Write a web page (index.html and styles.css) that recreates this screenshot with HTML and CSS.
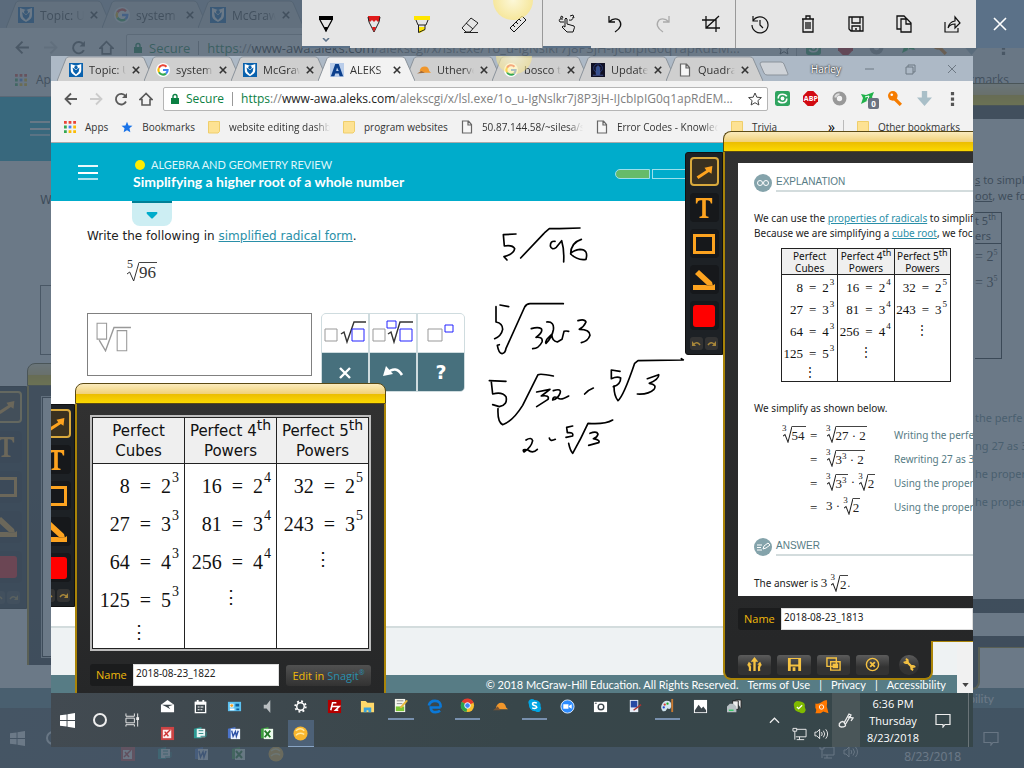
FILE: index.html
```html
<!DOCTYPE html>
<html lang="en">

<head>
    <meta charset="UTF-8">
    <meta name="viewport" content="width=device-width, initial-scale=1.0">
    <title>Sketch</title>
    <link rel="stylesheet" href="styles.css">
</head>

<body>
    <!-- shared icons -->
    <svg class="defs" aria-hidden="true">
        <symbol id="i-shield" viewBox="0 0 16 16"><rect width="16" height="16" fill="#0a62ae" /><path d="M2 1l6 2 6-2v7c0 4-3 5-6 7-3-2-6-3-6-7z" fill="#fff" /><path d="M4 5l4 3 4-3-1 5-3 3-3-3z" fill="#0a62ae" /><circle cx="8" cy="5" r="2" fill="#0a62ae" /></symbol>
        <symbol id="i-google" viewBox="0 0 16 16"><circle cx="8" cy="8" r="8" fill="#fff" /><g fill="none" stroke-width="2.4"><path d="M12 4.3A5.3 5.3 0 0 0 3.4 5.4" stroke="#ea4335" /><path d="M3.4 5.4a5.3 5.3 0 0 0 0 5.2" stroke="#fbbc05" /><path d="M3.4 10.6a5.3 5.3 0 0 0 8 1.5" stroke="#34a853" /><path d="M11.4 12.1A5 5 0 0 0 13.3 8H8" stroke="#4285f4" /></g></symbol>
        <symbol id="i-x" viewBox="0 0 10 10"><path d="M1 1l8 8M9 1l-8 8" stroke="currentColor" stroke-width="2" /></symbol>
        <symbol id="i-doc" viewBox="0 0 12 14"><path d="M1.500 1h6l3 3.500V13h-9zM7 1v4h3.500" fill="#f6f6f6" stroke="#666" stroke-width="1.200" /></symbol>
        <symbol id="i-folder" viewBox="0 0 12 14"><path d="M.5 1.500h11v10L10 13H.5z" fill="#fde293" stroke="#efce6b" /></symbol>
        <symbol id="i-back" viewBox="0 0 14 14"><path d="M13 7H2M7 1.500L1.500 7 7 12.500" fill="none" stroke="currentColor" stroke-width="1.800" /></symbol>
        <symbol id="i-reload" viewBox="0 0 14 14"><path d="M12 9.500A5.300 5.300 0 1 1 11.500 4" fill="none" stroke="currentColor" stroke-width="1.800" /><path d="M13 1v5H8z" fill="currentColor" /></symbol>
        <symbol id="i-home" viewBox="0 0 14 14"><path d="M7 1.500L1 7.500h2V13h8V7.500h2z" fill="none" stroke="currentColor" stroke-width="1.600" /></symbol>
        <symbol id="i-lock" viewBox="0 0 10 12"><rect x="1" y="5" width="8" height="6" fill="#0b8043" /><path d="M3 5V3.500a2 2 0 0 1 4 0V5" fill="none" stroke="#0b8043" stroke-width="1.400" /></symbol>
        <symbol id="i-star" viewBox="0 0 14 14"><path d="M7 1l1.800 4.200 4.600.4-3.500 3 1 4.400L7 10.700 3.100 13l1-4.400-3.500-3 4.600-.4z" /></symbol>
        <symbol id="i-apps" viewBox="0 0 13 13"><g fill="#ea4335"><path d="M0 0h3v3H0zM5 0h3v3H5zM10 0h3v3h-3z" /></g><path d="M0 5h3v3H0zM0 10h3v3H0z" fill="#34a853" /><path d="M5 5h3v3H5z" fill="#4285f4" /><path d="M10 5h3v3h-3zM5 10h3v3H5zM10 10h3v3h-3z" fill="#fbbc05" /></symbol>
        <symbol id="i-green" viewBox="0 0 14 14"><rect width="14" height="14" rx="2" fill="#2fa45f" /><path d="M3 7q0-4 4-4 3 0 4 2M11 7q0 4-4 4-3 0-4-2" stroke="#fff" stroke-width="1.500" fill="none" /><circle cx="7" cy="7" r="1.800" fill="#fff" /></symbol>
        <symbol id="i-abp" viewBox="0 0 16 16"><path d="M5 0h6l5 5v6l-5 5H5l-5-5V5z" fill="#d20a11" /></symbol>
        <symbol id="i-ring" viewBox="0 0 14 14"><circle cx="7" cy="7" r="4.500" fill="none" stroke="#999" stroke-width="4" /><path d="M3 6a4 4 0 0 1 4-3" stroke="#ddd" stroke-width="2" fill="none" /></symbol>
        <symbol id="i-star4" viewBox="0 0 15 13"><path d="M1 2l5 1 8-3-2 5 2 4-5-1-8 4 2-6z" fill="#21b24b" /><path d="M5 5l4-1-2 5" fill="none" stroke="#fff" /></symbol>
        <symbol id="i-key" viewBox="0 0 14 14"><circle cx="4.500" cy="4.500" r="4.500" fill="#f57c00" /><path d="M6 7l6 6" stroke="#f57c00" stroke-width="3" /><circle cx="3.500" cy="3.500" r="1.200" fill="#fff" /></symbol>
        <symbol id="i-down" viewBox="0 0 14 14"><path d="M4.500 0h5v6H14l-7 8-7-8h4.500z" fill="#a9bfc8" /></symbol>
        <symbol id="i-dots" viewBox="0 0 4 14"><path d="M.5 1h3v3h-3zM.5 6h3v3h-3zM.5 11h3v3h-3z" fill="#555" /></symbol>
        <symbol id="i-arrow" viewBox="0 0 20 16"><path d="M1 13L12 6 10 3 19 1l-1 9-3-2L3 16z" fill="#fda31f" /></symbol>
        <symbol id="i-text" viewBox="0 0 20 22"><path d="M1 0h18v6h-1.500q-.5-3.500-4-3.500H12V19q0 1.500 3 1.500V22H5v-1.500q3 0 3-1.500V2.500H6.500Q3 2.500 2.500 6H1z" fill="#fda31f" /></symbol>
        <symbol id="i-rect" viewBox="0 0 22 20"><path d="M1.500 1.500h19v17h-19z" fill="none" stroke="#fda31f" stroke-width="3" /></symbol>
        <symbol id="i-marker" viewBox="0 0 22 20"><path d="M0 15h12l7 1 3-2v6H0zM2 4l4-4 13 12 1 4-6-1z" fill="#fda31f" /></symbol>
        <symbol id="i-undo" viewBox="0 0 9 7"><path d="M2 4q3-3 6 1" fill="none" stroke="#a8873a" stroke-width="1.500" /><path d="M0 1v5h4z" fill="#a8873a" /></symbol>
        <symbol id="i-win" viewBox="0 0 16 16"><path d="M0 2.500l7-1v6H0zM8 1.300L16 0v7.500H8zM0 8.500h7v6l-7-1zM8 8.500h8V16l-8-1.300z" fill="#fff" /></symbol>
        <symbol id="i-ppt" viewBox="0 0 16 16"><rect x="1" y="1" width="14" height="14" fill="#c44" /><path d="M3 4h9v9H3z" fill="#fee" /><path d="M4 11l7-7M5 6l4 5" stroke="#c33" stroke-width="1.500" /></symbol>
        <symbol id="i-pub" viewBox="0 0 16 16"><path d="M1 3l8-2v12H1z" fill="#2b9a94" /><path d="M4 3h9v9H4z" fill="#e8f5f4" /><path d="M6 5h5M6 8h5M8 11h6V6" stroke="#2b8a86" fill="none" /></symbol>
        <symbol id="i-word" viewBox="0 0 16 16"><path d="M1 3l8-2v12H1z" fill="#4b73c9" /><path d="M4 3h10v11H4z" fill="#eef3ff" /><path d="M5 5l1.500 6L9 6l1 5 2-6" stroke="#2c50a5" stroke-width="1.500" fill="none" /></symbol>
        <symbol id="i-xls" viewBox="0 0 16 16"><path d="M1 3l8-2v12H1z" fill="#3c9e3e" /><path d="M4 3h10v11H4z" fill="#ecfaec" /><path d="M5 5l6 7M11 5l-6 7" stroke="#227b27" stroke-width="2" /></symbol>
        <symbol id="i-ball" viewBox="0 0 16 16"><circle cx="8" cy="8" r="7.500" fill="#f9b62d" /><path d="M3 5q5-4 9 0M3 10q4-4 9-1" stroke="#ffe9a0" stroke-width="1.500" fill="none" /></symbol>
        <symbol id="i-net" viewBox="0 0 16 14"><path d="M5 2h10v8H4M8 10v3M5 13h8M1 1h4v3H1zM3 4v9" fill="none" stroke="#eee" /></symbol>
        <symbol id="i-vol" viewBox="0 0 16 14"><path d="M1 5h2l3-3v10L3 9H1zM8 5q1.500 2 0 4M10 3.500q3 3.500 0 7M12.500 2q4 5 0 10" fill="none" stroke="#eee" /></symbol>
        <symbol id="i-note" viewBox="0 0 16 14"><path d="M1 1h14v10h-5l-2 2.500V11H1z" fill="none" stroke="#eee" stroke-width="1.200" /></symbol>
        <symbol id="i-root" viewBox="0 0 9 20" preserveAspectRatio="none"><path d="M0 12l2-2 3 9L9 .5" fill="none" stroke="currentColor" vector-effect="non-scaling-stroke" /></symbol>
        <symbol id="i-tab" viewBox="0 0 98 28" preserveAspectRatio="none"><path d="M0 28L9 3q1-2 3-2h73q2 0 3 2l10 25" stroke="#8b939b" vector-effect="non-scaling-stroke" /></symbol>
    </svg>

    <!-- dimmed desktop behind the snip -->
    <div class="desktop" aria-hidden="true">
        <div class="browser">
            <div class="tabs">
                <div class="tab"><svg class="shape"><use href="#i-tab" /></svg><svg class="fav"><use href="#i-shield" /></svg><span>Topic: U</span><svg class="close"><use href="#i-x" /></svg></div>
                <div class="tab"><svg class="shape"><use href="#i-tab" /></svg><svg class="fav"><use href="#i-google" /></svg><span>system</span><svg class="close"><use href="#i-x" /></svg></div>
                <div class="tab"><svg class="shape"><use href="#i-tab" /></svg><svg class="fav"><use href="#i-shield" /></svg><span>McGraw</span><svg class="close"><use href="#i-x" /></svg></div>
            </div>
            <div class="nav">
                <svg class="ic"><use href="#i-back" /></svg>
                <svg class="ic fwd"><use href="#i-back" /></svg>
                <svg class="ic"><use href="#i-reload" /></svg>
                <svg class="ic"><use href="#i-home" /></svg>
                <div class="omni"><svg class="lock"><use href="#i-lock" /></svg><span class="secure">Secure</span><span class="url"><i>https</i>://<b>www-awa.aleks.com</b>/alekscgi/x/lsl.exe/1o_u-IgNslkr7j8P3jH-IJcbIpIG0q1apRdEM...</span><svg class="star"><use href="#i-star" /></svg></div>
                <div class="ext"><svg><use href="#i-green" /></svg><svg><use href="#i-abp" /></svg><svg><use href="#i-ring" /></svg><svg><use href="#i-star4" /></svg><svg><use href="#i-key" /></svg><svg><use href="#i-down" /></svg><svg><use href="#i-dots" /></svg></div>
            </div>
            <div class="marks">
                <span class="mark"><svg><use href="#i-apps" /></svg>Apps</span>
                <span class="mark other">Other bookmarks</span>
            </div>
            <div class="aleks-head"><span class="burger"></span></div>
            <div class="page"><p class="prompt">Write</p><div class="ghost-box"></div></div>
            <div class="foot"><span>Accessibility</span></div>

            <div class="snagit one">
                <div class="tools">
                    <span class="tool on"><svg><use href="#i-arrow" /></svg></span><span class="tool"><svg><use href="#i-text" /></svg></span><span class="tool"><svg><use href="#i-rect" /></svg></span><span class="tool"><svg><use href="#i-marker" /></svg></span><span class="tool"><i class="red"></i></span>
                    <span class="minis"><span class="mini"><svg><use href="#i-undo" /></svg></span><span class="mini flip"><svg><use href="#i-undo" /></svg></span></span>
                </div>
                <div class="frame"><div class="bar"></div><div class="body"><div class="ghost-pic"></div></div></div>
            </div>

            <div class="snagit two">
                <div class="frame">
                    <div class="bar"></div>
                    <div class="body">
                        <div class="ghost-page">
                            <p><u>s</u> to simpli</p>
                            <p><u>oot</u>, we fo</p>
                            <div class="ghost-table"><div>t 5<sup>th</sup><br>ers</div><p class="num">= 2<sup>5</sup></p><p class="num">= 3<sup>5</sup></p></div>
                            <ul>
                                <li>the perfe</li>
                                <li>ng 27 as 3</li>
                                <li>he proper</li>
                                <li>he proper</li>
                            </ul>
                        </div>
                        <div class="ghost-name"></div>
                    </div>
                    <div class="actions"></div>
                </div>
            </div>
        </div>
        <div class="taskbar">
            <svg class="start"><use href="#i-win" /></svg>
            <span class="ring"></span>
            <div class="ghost-icons"><svg><use href="#i-ppt" /></svg><svg><use href="#i-pub" /></svg><svg><use href="#i-word" /></svg><svg><use href="#i-xls" /></svg><svg><use href="#i-ball" /></svg></div>
            <div class="ghost-tray"><svg><use href="#i-net" /></svg><svg><use href="#i-vol" /></svg></div>
            <div class="clock">8/23/2018</div>
            <svg class="note"><use href="#i-note" /></svg>
        </div>
    </div>
    <div class="veil"></div>

    <!-- the snip itself -->
    <main class="shot">
        <div class="browser">
            <div class="tabs">
                <div class="tab"><svg class="shape"><use href="#i-tab" /></svg><svg class="fav"><use href="#i-shield" /></svg><span>Topic: U</span><svg class="close"><use href="#i-x" /></svg></div>
                <div class="tab"><svg class="shape"><use href="#i-tab" /></svg><svg class="fav"><use href="#i-google" /></svg><span>system</span><svg class="close"><use href="#i-x" /></svg></div>
                <div class="tab"><svg class="shape"><use href="#i-tab" /></svg><svg class="fav"><use href="#i-shield" /></svg><span>McGraw</span><svg class="close"><use href="#i-x" /></svg></div>
                <div class="tab active"><svg class="shape"><use href="#i-tab" /></svg><svg class="fav" viewBox="0 0 16 16"><rect width="16" height="16" fill="#b9cdea" /><path d="M1 15L6 1h4l5 14h-4l-1-3H6l-1 3zM7 9h3L8 5z" fill="#0b3f8c" /></svg><span>ALEKS</span><svg class="close"><use href="#i-x" /></svg></div>
                <div class="tab"><svg class="shape"><use href="#i-tab" /></svg><svg class="fav" viewBox="0 0 16 16"><path d="M3 9q1-5 6-5 4 0 5 5l2 2H5z" fill="#f0962b" /><path d="M0 12l5-3 4 2z" fill="#a06a3a" /></svg><span>Utherve</span><svg class="close"><use href="#i-x" /></svg></div>
                <div class="tab"><svg class="shape"><use href="#i-tab" /></svg><svg class="fav"><use href="#i-google" /></svg><span>bosco t</span><svg class="close"><use href="#i-x" /></svg></div>
                <div class="tab"><svg class="shape"><use href="#i-tab" /></svg><svg class="fav" viewBox="0 0 16 16"><rect width="16" height="16" fill="#101024" /><circle cx="8" cy="6" r="5" fill="none" stroke="#2b3e80" /><path d="M6 13V5l2-2 2 2v8zM2 14h12" fill="#34508f" stroke="#46589a" /></svg><span>Update</span><svg class="close"><use href="#i-x" /></svg></div>
                <div class="tab"><svg class="shape"><use href="#i-tab" /></svg><svg class="fav"><use href="#i-doc" /></svg><span>Quadra</span><svg class="close"><use href="#i-x" /></svg></div>
                <svg class="newtab" viewBox="0 0 30 15"><path d="M1 3q0-2 2-2h19q2 0 3 2l4 10q0 1-1 1H8q-2 0-3-2z" fill="#cfd3d8" stroke="#8b939b" /></svg>
                <span class="user">Harley</span>
                <svg class="winctl" viewBox="0 0 92 12"><path d="M0 6h9M41 4h7v7h-7zM43 4V2h7v7h-2M83 2l8 8M91 2l-8 8" fill="none" stroke="#6d7883" /></svg>
            </div>
            <div class="nav">
                <svg class="ic"><use href="#i-back" /></svg>
                <svg class="ic fwd"><use href="#i-back" /></svg>
                <svg class="ic"><use href="#i-reload" /></svg>
                <svg class="ic"><use href="#i-home" /></svg>
                <div class="omni"><svg class="lock"><use href="#i-lock" /></svg><span class="secure">Secure</span><span class="url"><i>https</i>://<b>www-awa.aleks.com</b>/alekscgi/x/lsl.exe/1o_u-IgNslkr7j8P3jH-IJcbIpIG0q1apRdEM...</span><svg class="star"><use href="#i-star" /></svg></div>
                <div class="ext">
                    <svg><use href="#i-green" /></svg>
                    <span class="abp"><svg><use href="#i-abp" /></svg><b>ABP</b></span>
                    <svg><use href="#i-ring" /></svg>
                    <span class="abp"><svg><use href="#i-star4" /></svg><em>0</em></span>
                    <svg><use href="#i-key" /></svg>
                    <svg><use href="#i-down" /></svg>
                    <svg><use href="#i-dots" /></svg>
                </div>
            </div>
            <div class="marks">
                <a class="mark" href="#"><svg><use href="#i-apps" /></svg>Apps</a>
                <a class="mark blue" href="#"><svg><use href="#i-star" /></svg>Bookmarks</a>
                <a class="mark fade" href="#"><svg><use href="#i-folder" /></svg>website editing dashb</a>
                <a class="mark" href="#"><svg><use href="#i-folder" /></svg>program websites</a>
                <a class="mark fade" href="#"><svg><use href="#i-doc" /></svg>50.87.144.58/~silesa/s</a>
                <a class="mark fade" href="#"><svg><use href="#i-doc" /></svg>Error Codes - Knowled</a>
                <a class="mark" href="#"><svg><use href="#i-folder" /></svg>Trivia</a>
                <span class="more">»</span>
                <a class="mark other" href="#"><svg><use href="#i-folder" /></svg>Other bookmarks</a>
            </div>

            <header class="aleks-head">
                <span class="burger"></span>
                <div class="titles">
                    <div class="unit"><i class="dot"></i>ALGEBRA AND GEOMETRY REVIEW</div>
                    <h1>Simplifying a higher root of a whole number</h1>
                </div>
                <div class="progress"><i class="done"></i><i></i></div>
            </header>

            <section class="page">
                <div class="pull"><svg viewBox="0 0 12 8"><path d="M1 1h10q1 1 0 2L7 7q-1 1-2 0L1 3q-1-1 0-2" fill="#00accb" /></svg></div>
                <p class="prompt">Write the following in <a href="#">simplified radical form</a>.</p>
                <div class="question"><span class="root big"><sup>5</sup><svg><use href="#i-root" /></svg><span>96</span></span></div>
                <div class="work">
                    <div class="answer" role="textbox" tabindex="0"><svg viewBox="0 0 34 28"><path d="M1 1h9v15H1zM20 8h9v19h-9z" fill="none" stroke="#999" /><path d="M3 17l6 10L17 5h16" fill="none" stroke="#999" stroke-width="1.300" /></svg></div>
                    <div class="keypad">
                        <button aria-label="Square root"><svg viewBox="0 0 42 26"><path d="M1 9h12v12H1z" fill="none" stroke="#999" /><path d="M17 14l3-2 3 10 7-20h13" fill="none" stroke="#333" stroke-width="1.400" /><path d="M28 9h12v12H28z" fill="none" stroke="#22f" /></svg></button>
                        <button aria-label="Nth root"><svg viewBox="0 0 42 26"><path d="M1 9h12v12H1z" fill="none" stroke="#999" /><path d="M16 14l3-2 3 10 6-20h13" fill="none" stroke="#333" stroke-width="1.400" /><path d="M28 9h12v12H28zM15 1h9v7h-9z" fill="none" stroke="#22f" /></svg></button>
                        <button aria-label="Exponent"><svg viewBox="0 0 42 26"><path d="M8 9h14v12H8z" fill="none" stroke="#999" /><path d="M25 5h8v7h-8z" fill="none" stroke="#22f" /></svg></button>
                        <button class="act" aria-label="Clear"><svg viewBox="0 0 42 26"><path d="M16 9l10 10M26 9L16 19" stroke="#fff" stroke-width="2.400" /></svg></button>
                        <button class="act" aria-label="Undo"><svg viewBox="0 0 42 26"><path d="M11 17l3-10 7 8z" fill="#fff" /><path d="M15 14q9-8 15 2" fill="none" stroke="#fff" stroke-width="2.600" /></svg></button>
                        <button class="act help">?</button>
                    </div>
                </div>
            </section>
            <div class="pagefoot"></div>
            <footer class="foot"><span>© 2018 McGraw-Hill Education. All Rights Reserved.</span><a href="#">Terms of Use</a><i>|</i><a href="#">Privacy</a><i>|</i><a href="#">Accessibility</a></footer>
            <div class="scroll"><svg viewBox="0 0 8 5"><path d="M0 0h8L4 5z" fill="#444" /></svg></div>

            <!-- handwriting -->
            <svg class="ink" viewBox="0 0 900 990">
                <g fill="none" stroke="#000" stroke-width="5" stroke-linecap="round" stroke-linejoin="round">
                    <path d="M228 282l-38 2 3 34q25-4 31 8-2 16-32 24l9 10M242 354l70-74M314 278l14-12h30l62-2M345 304q-14-2-14 14 4 14 18 4l16-20q8 26 6 64M424 298q-32 10-32 44 20 20 46 16 8-30-18-30-18 2-28 12" />
                    <path d="M206 500l-26-5M168 500v46q20 4 20 22-4 20-24 28M178 614l-6 2q4 24 14 25 10-2 12-16l56-124q6-10 16-10h100M274 566q20-6 30 0 6 10-16 26 22-2 18 14-10 20-28 20M320 546q24-2 20 24-4 22-22 40-4-8 8-18l10-10q-2 20 16 24l14-8 6-24q6-2 14 0M414 542q20-6 24 4-6 14-20 22 32 0 32 18-6 18-26 22" />
                    <path d="M148 722l50 2M154 726l4 36q28-8 40 8 6 24-20 30l-20-6M174 806q-2 40 14 48 30-10 60-58l46-92q8-4 46 4M290 756l40-8-26 20q26-4 20 10l-34 22M340 752q26-8 20 8-6 16-22 20 0-14 16-6 8 8 32-6M434 762q10-12 26-18M540 694l-26-4v26q18-8 28-2 0 20-22 26l2-2q0 30 12 44 16-12 50-112l10-8 136-2-6-4M622 716l34-12q2 12-28 26 24 4 14 18-16 16-50 14" />
                    <path d="M258 900q16-10 20 2-4 20-26 34-8-10 12-6 14 12 28-2M328 894q2 12 18 4M398 858l-18 4 2 16q20-2 16 10l-20 4M386 910q4 20 12 30 24-42 46-90 50 4 74-10M450 880q20-8 24 2-2 10-14 14 22 4 16 12l-30 8" />
                </g>
            </svg>

            <div class="snagit one">
                <div class="tools">
                    <span class="tool on"><svg><use href="#i-arrow" /></svg></span><span class="tool"><svg><use href="#i-text" /></svg></span><span class="tool"><svg><use href="#i-rect" /></svg></span><span class="tool"><svg><use href="#i-marker" /></svg></span><span class="tool"><i class="red"></i></span>
                    <span class="minis"><span class="mini"><svg><use href="#i-undo" /></svg></span><span class="mini flip"><svg><use href="#i-undo" /></svg></span></span>
                </div>
                <div class="frame">
                    <div class="bar"></div>
                    <div class="body">
                        <div class="pic">
                            <table class="powers">
                                <thead>
                                    <tr><th>Perfect<br>Cubes</th><th>Perfect 4<sup>th</sup><br>Powers</th><th>Perfect 5<sup>th</sup><br>Powers</th></tr>
                                </thead>
                                <tbody>
                                    <tr><td>8<b>=</b>2<sup>3</sup></td><td>16<b>=</b>2<sup>4</sup></td><td>32<b>=</b>2<sup>5</sup></td></tr>
                                    <tr><td>27<b>=</b>3<sup>3</sup></td><td>81<b>=</b>3<sup>4</sup></td><td>243<b>=</b>3<sup>5</sup></td></tr>
                                    <tr><td>64<b>=</b>4<sup>3</sup></td><td>256<b>=</b>4<sup>4</sup></td><td class="etc">⋮</td></tr>
                                    <tr><td>125<b>=</b>5<sup>3</sup></td><td class="etc">⋮</td><td></td></tr>
                                    <tr><td class="etc">⋮</td><td></td><td></td></tr>
                                </tbody>
                            </table>
                        </div>
                        <div class="namerow"><label for="n1">Name</label><input id="n1" type="text" value="2018-08-23_1822"><button class="edit">Edit in <span>Snagit<sup>®</sup></span></button></div>
                    </div>
                </div>
            </div>

            <div class="snagit two">
                <div class="tools">
                    <span class="tool on"><svg><use href="#i-arrow" /></svg></span><span class="tool"><svg><use href="#i-text" /></svg></span><span class="tool"><svg><use href="#i-rect" /></svg></span><span class="tool"><svg><use href="#i-marker" /></svg></span><span class="tool"><i class="red"></i></span>
                    <span class="minis"><span class="mini"><svg><use href="#i-undo" /></svg></span><span class="mini flip"><svg><use href="#i-undo" /></svg></span></span>
                </div>
                <div class="frame">
                    <div class="bar"></div>
                    <div class="body">
                        <div class="explain">
                            <h2><svg viewBox="0 0 18 18"><circle cx="9" cy="9" r="9" fill="#84a3ab" /><circle cx="6" cy="9" r="2.500" fill="none" stroke="#fff" /><circle cx="12" cy="9" r="2.500" fill="none" stroke="#fff" /></svg><span>EXPLANATION</span></h2>
                            <p>We can use the <a href="#">properties of radicals</a> to simplify<br>Because we are simplifying a <a href="#">cube root</a>, we focus</p>
                            <table class="powers small">
                                <thead>
                                    <tr><th>Perfect<br>Cubes</th><th>Perfect 4<sup>th</sup><br>Powers</th><th>Perfect 5<sup>th</sup><br>Powers</th></tr>
                                </thead>
                                <tbody>
                                    <tr><td>8<b>=</b>2<sup>3</sup></td><td>16<b>=</b>2<sup>4</sup></td><td>32<b>=</b>2<sup>5</sup></td></tr>
                                    <tr><td>27<b>=</b>3<sup>3</sup></td><td>81<b>=</b>3<sup>4</sup></td><td>243<b>=</b>3<sup>5</sup></td></tr>
                                    <tr><td>64<b>=</b>4<sup>3</sup></td><td>256<b>=</b>4<sup>4</sup></td><td class="etc">⋮</td></tr>
                                    <tr><td>125<b>=</b>5<sup>3</sup></td><td class="etc">⋮</td><td></td></tr>
                                    <tr><td class="etc">⋮</td><td></td><td></td></tr>
                                </tbody>
                            </table>
                            <p>We simplify as shown below.</p>
                            <div class="steps">
                                <span class="root"><sup>3</sup><svg><use href="#i-root" /></svg><span>54</span></span><span>=</span><span><span class="root"><sup>3</sup><svg><use href="#i-root" /></svg><span>27 · 2</span></span></span><em>Writing the perfect</em>
                                <span></span><span>=</span><span><span class="root"><sup>3</sup><svg><use href="#i-root" /></svg><span>3<sup>3</sup> · 2</span></span></span><em>Rewriting 27 as 3</em>
                                <span></span><span>=</span><span><span class="root"><sup>3</sup><svg><use href="#i-root" /></svg><span>3<sup>3</sup></span></span> · <span class="root"><sup>3</sup><svg><use href="#i-root" /></svg><span>2</span></span></span><em>Using the property</em>
                                <span></span><span>=</span><span>3 · <span class="root"><sup>3</sup><svg><use href="#i-root" /></svg><span>2</span></span></span><em>Using the property</em>
                            </div>
                            <h2><svg viewBox="0 0 18 18"><circle cx="9" cy="9" r="9" fill="#84a3ab" /><path d="M3 7h5M3 9.500h4M3 12h5M9 11l1-3 4-3 2 2-4 3z" fill="none" stroke="#fff" /></svg><span>ANSWER</span></h2>
                            <p class="final">The answer is <span class="math">3 <span class="root"><sup>3</sup><svg><use href="#i-root" /></svg><span>2</span></span></span>.</p>
                        </div>
                        <div class="namerow"><label for="n2">Name</label><input id="n2" type="text" value="2018-08-23_1813"></div>
                    </div>
                    <div class="actions">
                        <button aria-label="Share"><svg viewBox="0 0 16 16"><path d="M8 15V3M3 15q1-4-1-7M13 15q-1-4 1-7" fill="none" stroke="#f5c242" stroke-width="2.500" /><path d="M8 0l4 5H4zM0 9l2-4 3 3zM16 9l-2-4-3 3z" fill="#f5c242" /></svg></button>
                        <button aria-label="Save"><svg viewBox="0 0 16 16"><path d="M1 1h14v14H1zM4 2h8v6H4zM4 10h8v5H4zM6 11h3v4H6z" fill="#f5c242" fill-rule="evenodd" /></svg></button>
                        <button aria-label="Copy"><svg viewBox="0 0 16 16"><path d="M1 1h10v9H1zM5 5h10v9H5z" fill="none" stroke="#f5c242" stroke-width="1.500" /><path d="M7 7h6v5H7z" fill="#f5c242" /></svg></button>
                        <button aria-label="Close"><svg viewBox="0 0 16 16"><circle cx="8" cy="8" r="6.500" fill="none" stroke="#f5c242" stroke-width="1.500" /><path d="M5.500 5.500l5 5M10.500 5.500l-5 5" stroke="#f5c242" stroke-width="2" /></svg></button>
                        <button class="round" aria-label="Settings"><svg viewBox="0 0 16 16"><path d="M4 4l8 8" stroke="#f5c242" stroke-width="2.500" /><path d="M2 5q1 2 3 1.500T6 3L4 2M14 11q-1-2-3-1.500T10 13l2 1" fill="none" stroke="#f5c242" stroke-width="1.800" /></svg></button>
                    </div>
                </div>
            </div>
        </div>

        <div class="taskbar">
            <svg class="start"><use href="#i-win" /></svg>
            <span class="ring"></span>
            <svg class="view" viewBox="0 0 16 14"><path d="M1 0v3h9V0M1 5h9v5H1zM1 14v-2h9v2M13.500 0v14" fill="none" stroke="#eee" /><path d="M12 4h3v3h-3z" fill="#eee" /></svg>
            <div class="icons">
                <span><svg viewBox="0 0 16 16"><path d="M1 6l7-5 7 5v8H1z" fill="#fff" /><path d="M2 6h12l-5 2 2 3-5-3z" fill="#3b454b" /></svg></span>
                <span><svg viewBox="0 0 16 16"><path d="M2.500 3.500h11v11h-11z" fill="none" stroke="#fff" stroke-width="1.400" /><path d="M2 3h12v3H2zM4 1h2v3H4zM10 1h2v3h-2zM5 8h2v1H5zM8 8h3v1H8zM5 11h2v1H5zM8 11h2v1H8z" fill="#fff" /></svg></span>
                <span><svg viewBox="0 0 16 16"><path d="M1 3h14v10H1z" fill="#5cc1f0" /><path d="M3 5h4v4H3zM3 10h5v2H3z" fill="#fff" /><path d="M9 5h4v3H9zM10 10h3v2h-3z" fill="#0b5f9c" /><circle cx="5" cy="7" r="1.500" fill="#f4a020" /></svg></span>
                <span><svg viewBox="0 0 16 16"><path d="M4 6h3l4-5v14L7 10H4z" fill="#b9bec1" /></svg></span>
                <span><svg viewBox="0 0 16 16"><circle cx="8" cy="8" r="4" fill="none" stroke="#fff" stroke-width="1.600" /><circle cx="8" cy="8" r="5.600" fill="none" stroke="#fff" stroke-width="2" stroke-dasharray="2 2.400" /></svg></span>
                <span><svg viewBox="0 0 16 16"><rect x="1" y="1" width="14" height="14" fill="#b30000" /><path d="M4 12L6 4h4M5 8h4M9 8h4l-4 4h3" fill="none" stroke="#fff" stroke-width="1.700" /></svg></span>
                <span><svg viewBox="0 0 16 16"><path d="M1 2h5l2 2h7v10H1z" fill="#ffd96b" /><path d="M4 14V9h8v5h-3v-2H7v2z" fill="#3ba3dc" /></svg></span>
                <span class="run"><svg viewBox="0 0 16 16"><path d="M2 1h11v14H2z" fill="#f6f6ee" /><path d="M3 9h9v5H3z" fill="#7ac433" /><path d="M4 3h7M4 6h6" stroke="#888" /><path d="M7 10l7-8 2 1-7 8z" fill="#e7b93c" /></svg></span>
                <span><svg viewBox="0 0 16 16"><path d="M4 9h7M14.500 9H4q0 5 5 5 3 0 5-1.500M14.500 9Q15 2 8.500 2 3 2 2 7" fill="none" stroke="#0a78d7" stroke-width="2.800" /></svg></span>
                <span class="run"><svg viewBox="0 0 16 16"><circle cx="8" cy="8" r="7" fill="#fbc02d" /><path d="M8 8L2 4a7 7 0 0 1 12.500 1z" fill="#e33b2e" /><path d="M8 8L7 15A7 7 0 0 1 2 4z" fill="#2ba24c" /><circle cx="8" cy="8" r="3" fill="#4285f4" stroke="#fff" /></svg></span>
                <span><svg viewBox="0 0 16 16"><path d="M3 10q1-6 6-6 4 0 5 5l2 2H5z" fill="#f0962b" /><path d="M0 12l5-4 3 4z" fill="#7a5534" /></svg></span>
                <span class="run"><svg viewBox="0 0 16 16"><path d="M5 1q2 0 3 1 7 0 6.500 7Q16 11 14 14q-2 2-5 0-7 0-7-7-2-5 3-6" fill="#00a5e3" /><path d="M10.500 5.500Q8 4 6 5.500 5.500 7.500 8 8t2.500 2Q9 12 5.500 10.500" fill="none" stroke="#fff" stroke-width="1.600" /></svg></span>
                <span><svg viewBox="0 0 16 16"><circle cx="8" cy="8" r="7" fill="#2d8cff" stroke="#dfeaf8" /><path d="M3.500 5.500H9v5H3.500zM9.500 7.500l3-2v5l-3-2z" fill="#fff" /></svg></span>
                <span><svg viewBox="0 0 16 16"><path d="M1 3h14v11H1z" fill="#fff" /><circle cx="8.500" cy="8.500" r="3" fill="none" stroke="#3b454b" stroke-width="1.500" /><path d="M2 4h2v1H2z" fill="#3b454b" /></svg></span>
                <span><svg viewBox="0 0 16 16"><path d="M3 1h9v13H3z" fill="#e6ecf6" /><path d="M4 2h7v7H4z" fill="#2749a3" /><path d="M7 12l8-6" stroke="#a33" stroke-width="1.500" /></svg></span>
                <span class="run"><svg viewBox="0 0 16 16"><path d="M7 3q6 0 5 6-1 4-4 2-2 4-5 3-3-3-1-7 2-4 5-4" fill="#cfe4ee" /><path d="M12 1h2v14h-2z" fill="#c87a32" /><circle cx="5" cy="7" r="1.200" fill="#d33" /><circle cx="8" cy="6" r="1.200" fill="#2a2" /><circle cx="4" cy="10" r="1.200" fill="#24c" /></svg></span>
                <span><svg viewBox="0 0 16 16"><path d="M1 1h14v14H1z" fill="#fff" /><path d="M2 12l4-6 3 4 2-2 3 4v2H2z" fill="#3b454b" /></svg></span>
                <span><svg viewBox="0 0 16 16"><path d="M6 2h6v9H6zM9 1h6v9" fill="#eee" stroke="#222" /><path d="M0 8l3-3h4l3 3v6H0z" fill="#b8c0c4" /><path d="M2 12h5" stroke="#3c6" stroke-width="1.500" /></svg></span>
                <span><svg><use href="#i-ppt" /></svg></span>
                <span><svg><use href="#i-pub" /></svg></span>
                <span><svg><use href="#i-word" /></svg></span>
                <span><svg><use href="#i-xls" /></svg></span>
                <span class="cur"><svg><use href="#i-ball" /></svg></span>
            </div>
            <div class="tray">
                <svg class="up" viewBox="0 0 12 7"><path d="M1 6l5-5 5 5" fill="none" stroke="#eee" stroke-width="1.300" /></svg>
                <div class="quad">
                    <svg viewBox="0 0 16 16"><path d="M5 1q3 0 5 1 5 1 4 6 2 3 0 6-3 2-6 0-6-1-6-6-2-5 3-7" fill="#7fba00" /><path d="M5 8l2 2 4-4" fill="none" stroke="#fff" stroke-width="1.400" /></svg>
                    <svg viewBox="0 0 16 16"><path d="M1 4q3 1 6-1 4-3 7-3 1 4 0 7l2 8-6-2-3 2-6 0q2-4 0-6z" fill="#ff7800" /><circle cx="8" cy="8" r="2.500" fill="none" stroke="#fff" /></svg>
                    <svg><use href="#i-net" /></svg>
                    <svg><use href="#i-vol" /></svg>
                </div>
                <div class="pen"><svg viewBox="0 0 16 16"><path d="M1 12q4-5 6 0 2 3-4 3-3-1-1-4M6 11L11 2l2 1-6 10M10 5l5 1-2 3" fill="none" stroke="#eee" stroke-width="1.300" /></svg></div>
                <div class="clock">6:36 PM<br>Thursday<br>8/23/2018</div>
                <svg class="note"><use href="#i-note" /></svg>
            </div>
        </div>
        <i class="glow"></i>
    </main>

    <!-- ink toolbar -->
    <nav class="inkbar">
        <button class="sel" aria-label="Pen"><svg viewBox="0 0 24 24"><path d="M5 4h14v4H5z" /><path d="M6 8l6 11 6-11" fill="none" stroke="#000" stroke-width="1.300" /><path d="M10 15h4l-2 5z" /></svg><svg class="chev" viewBox="0 0 8 4"><path d="M1 0l3 3 3-3" fill="none" stroke="#5b7188" stroke-width="1.500" /></svg></button>
        <button aria-label="Pencil"><svg viewBox="0 0 24 24"><path d="M6 4h12v4l-2 2-2-2-2 2-2-2-2 2-2-2z" fill="#e01b1b" /><path d="M6 5l1 5 5 10 5-10 1-5" fill="none" stroke="#222" /><path d="M10 15h4l-2 5z" fill="#e01b1b" /></svg></button>
        <button aria-label="Highlighter"><svg viewBox="0 0 24 24"><path d="M4 4h16v4H4zM9 15h6v3l-5 3H9z" fill="#ffe600" /><path d="M6 8l2 5h8l2-5M8.500 13v7.500l6.500-3V13" fill="none" stroke="#222" /></svg></button>
        <button aria-label="Eraser"><svg viewBox="0 0 24 24"><path d="M4 16l9-10 7 5-8 9H8zM8 11l7 6M6 20.500h14" fill="none" stroke="#222" /></svg></button>
        <button aria-label="Ruler"><svg viewBox="0 0 24 24"><path d="M4 16L16 4l4 4L8 20zM7 13l2 2M10 10l2 2M13 7l2 2" fill="none" stroke="#111" /></svg></button>
        <i class="sep"></i>
        <button class="sel" aria-label="Touch writing"><svg viewBox="0 0 24 24"><path d="M10 15V7q1-2 2 0v5l7 2q1 1 0 3l-1 3h-6l-5-5q1-2 3 0M9 10H5q-2-3 1-3h2M6 7q-1-3 1-3l1 2M14 8q4 1 4-3M15 4l3-1 1 3" fill="none" stroke="#111" /></svg></button>
        <button aria-label="Undo"><svg viewBox="0 0 24 24"><path d="M6 4v6h6M6 10q5-5 10-2 5 6-4 12" fill="none" stroke="#111" stroke-width="1.300" /></svg></button>
        <button aria-label="Redo"><svg viewBox="0 0 24 24"><path d="M18 4v6h-6M18 10q-5-5-10-2-5 6 4 12" fill="none" stroke="#aaa" stroke-width="1.300" /></svg></button>
        <button aria-label="Crop"><svg viewBox="0 0 24 24"><path d="M3 8h14v12M7 4v12h14M7 16L20 4" fill="none" stroke="#111" stroke-width="1.300" /></svg></button>
        <i class="sep"></i>
        <button aria-label="History"><svg viewBox="0 0 24 24"><path d="M5 9a8 8 0 1 1-1 4M5 4v5h5M12 8v5l3 3" fill="none" stroke="#111" stroke-width="1.200" /></svg></button>
        <button aria-label="Delete"><svg viewBox="0 0 24 24"><path d="M6 7h12M7 7v13h10V7M10 7V4h4v3M10 10v7M12 10v7M14 10v7" fill="none" stroke="#111" stroke-width="1.300" /></svg></button>
        <button aria-label="Save"><svg viewBox="0 0 24 24"><path d="M5 5h14v14H7l-2-2zM8 5v6h8V5M8 19v-5h8v5M11 17h2" fill="none" stroke="#111" stroke-width="1.300" /></svg></button>
        <button aria-label="Copy"><svg viewBox="0 0 24 24"><path d="M9 17H5V4h7l3 3M9 7h6l4 4v9H9zM14 7v5h5" fill="none" stroke="#111" stroke-width="1.300" /></svg></button>
        <button aria-label="Share"><svg viewBox="0 0 24 24"><path d="M5 10v10h13v-4M8 16q1-6 7-7V5l5 6-5 5v-4q-5 0-7 4" fill="none" stroke="#111" stroke-width="1.200" /></svg></button>
        <button class="exit" aria-label="Exit"><svg viewBox="0 0 24 24"><path d="M6 6l12 12M18 6L6 18" stroke="#fff" stroke-width="1.600" /></svg></button>
        <i class="glow"></i>
    </nav>
</body>

</html>
```
FILE: styles.css
```css
* {
    margin: 0;
    padding: 0;
    box-sizing: border-box;
}

body {
    height: 100vh;
    position: relative;
    overflow: hidden;
    font-family: "Open Sans", "Noto Sans", sans-serif;
    background: #46525f;
}

svg {
    display: block;
    flex: none;
}

button {
    border: 0;
    font-family: inherit;
}

.defs {
    position: absolute;
    width: 0;
    height: 0;
}

/* two copies of the screen, full size and shrunk */

.desktop {
    --text: 12px;
    --url: 13px;
    --tabs: 28px;
    --tab: 96px;
    --nav: 35px;
    --marks: 34px;
    --head: 64px;
    --foot: 20px;
    --task: 60px;
    --fav: 16px;
    --ic: 15px;
    --title: 23px;
    --tools: 42px;
    --tool: 32px;
    position: absolute;
    inset: 0;
    display: flex;
    flex-direction: column;
}

.shot {
    --text: 11px;
    --url: 12px;
    --tabs: 25px;
    --tab: 87px;
    --nav: 31px;
    --marks: 31px;
    --head: 58px;
    --foot: 18px;
    --task: 54px;
    --fav: 14px;
    --ic: 14px;
    --title: 21px;
    --tools: 38px;
    --tool: 29px;
    position: absolute;
    inset: 56px 51px 21px;
    display: flex;
    flex-direction: column;
    overflow: hidden;
}

.veil {
    position: absolute;
    inset: 0;
    background: rgba(70, 88, 105, .8);
}

.browser {
    position: relative;
    flex: 1;
    min-height: 0;
    display: flex;
    flex-direction: column;
    overflow: hidden;
    background: #fff;
}

/* tab strip */

.tabs {
    height: var(--tabs);
    display: flex;
    align-items: center;
    padding-left: 6px;
    background: #adb9c6;
    font-size: var(--text);
    color: #333;
}

.tab {
    position: relative;
    width: var(--tab);
    height: 100%;
    flex: none;
    display: flex;
    align-items: center;
    gap: 6px;
    padding: 2px 4px 0 12px;
}

.tab .shape {
    position: absolute;
    left: 0;
    top: 0;
    width: calc(100% + 10px);
    height: 100%;
    fill: #cfcfcf;
}

.tab.active .shape {
    fill: #f2f2f2;
}

.tab > *:not(.shape) {
    position: relative;
}

.tab.active {
    z-index: 1;
}

.tab span {
    flex: 1;
    overflow: hidden;
    white-space: nowrap;
    -webkit-mask-image: linear-gradient(90deg, #000 75%, transparent);
    mask-image: linear-gradient(90deg, #000 75%, transparent);
}

.fav {
    width: var(--fav);
    height: var(--fav);
}

.close {
    width: 8px;
    height: 8px;
    color: #333;
}

.newtab {
    width: 30px;
    height: 15px;
    margin-left: 6px;
}

.user {
    margin-left: auto;
    font-size: 10px;
    color: #fff;
    text-shadow: 0 0 2px #222, 0 0 2px #222;
}

.winctl {
    width: 92px;
    height: 12px;
    margin: 0 16px 0 24px;
}

/* address row */

.nav {
    height: var(--nav);
    display: flex;
    align-items: center;
    gap: 11px;
    padding: 4px 0 0 13px;
    background: #f2f2f2;
    color: #5a5a5a;
}

.desktop .nav {
    gap: 13px;
    padding-left: 15px;
}

.nav .ic {
    width: var(--ic);
    height: var(--ic);
}

.nav .fwd {
    transform: scaleX(-1);
    color: #ccc;
}

.omni {
    flex: 1;
    min-width: 0;
    height: 24px;
    margin-left: -1px;
    display: flex;
    align-items: center;
    border: 1px solid #b5b5b5;
    border-radius: 2px;
    background: #fff;
    font-size: var(--url);
    white-space: nowrap;
}

.desktop .omni {
    height: 27px;
}

.lock {
    width: 10px;
    height: 12px;
    margin: 0 6px;
}

.secure {
    color: #0b8043;
    padding-right: 8px;
    margin-right: 8px;
    border-right: 1px solid #999;
    line-height: 14px;
}

.url {
    flex: 1;
    min-width: 0;
    overflow: hidden;
    color: #808080;
}

.url i {
    font-style: normal;
    color: #0b8043;
}

.url b {
    font-weight: 400;
    color: #222;
}

.star {
    width: 14px;
    height: 14px;
    margin: 0 5px;
    fill: none;
    stroke: #444;
}

.ext {
    width: 198px;
    flex: none;
    display: flex;
    align-items: center;
    justify-content: space-between;
    margin-left: -4px;
    padding-right: 13px;
}

.desktop .ext {
    width: 218px;
}

.ext svg {
    width: 15px;
    height: 15px;
}

.abp {
    position: relative;
}

.abp b {
    position: absolute;
    inset: 4px 0 0;
    font-size: 7px;
    line-height: 7px;
    text-align: center;
    color: #fff;
}

.abp em {
    position: absolute;
    left: 8px;
    top: 7px;
    width: 11px;
    border-radius: 2px;
    background: #6b7280;
    color: #fff;
    font: 700 8px/11px "Open Sans", sans-serif;
    text-align: center;
}

/* bookmarks */

.marks {
    height: var(--marks);
    display: flex;
    align-items: center;
    gap: 13px;
    padding: 0 13px;
    background: #f2f2f2;
    border-bottom: 1px solid #aaa;
    font-size: 10px;
}

.desktop .marks {
    font-size: 12px;
    padding: 0 15px;
}

.mark {
    display: flex;
    align-items: center;
    gap: 9px;
    color: #333;
    text-decoration: none;
    white-space: nowrap;
}

.mark svg {
    width: 12px;
    height: 14px;
}

.mark.blue svg {
    fill: #1a73e8;
}

.mark.fade {
    width: 122px;
    overflow: hidden;
    -webkit-mask-image: linear-gradient(90deg, #000 88%, transparent);
    mask-image: linear-gradient(90deg, #000 88%, transparent);
}

.mark.other {
    margin-left: auto;
}

.more {
    margin-left: auto;
    font-size: 14px;
    padding-right: 8px;
    border-right: 1px solid #bbb;
    line-height: 14px;
}

.more + .mark.other {
    margin-left: 0;
}

/* course header */

.aleks-head {
    height: var(--head);
    display: flex;
    padding: 22px 0 0 27px;
    background: #00accb;
    color: #fff;
    font-family: Lato, sans-serif;
}

.desktop .aleks-head {
    padding: 24px 0 0 30px;
}

.burger {
    width: 20px;
    height: 15px;
    border-top: 2px solid #e8f8fb;
    border-bottom: 2px solid #a9e2ee;
    background: linear-gradient(#fff, #fff) 0 5px / 100% 2px no-repeat;
}

.titles {
    margin: -9px 0 0 35px;
    white-space: nowrap;
}

.unit {
    display: flex;
    align-items: center;
    gap: 6px;
    padding-left: 2px;
    font-size: 11px;
    line-height: 17px;
    color: #dff6fa;
}

.dot {
    width: 10px;
    height: 10px;
    border-radius: 50%;
    background: #ffec00;
}

h1 {
    font-size: 14px;
    font-weight: 700;
    line-height: 17px;
}

.progress {
    flex: 1;
    display: flex;
    gap: 2px;
    margin: 4px 0 0 211px;
}

.progress i {
    width: 66px;
    height: 10px;
    border: 1px solid #9be0ec;
}

.progress .done {
    width: 35px;
    background: #66bb6a;
    border-radius: 5px 0 0 5px;
}

/* exercise */

.page {
    flex: 1;
    min-height: 0;
    padding: 0 36px;
    font-family: "DejaVu Sans", sans-serif;
    font-size: 12px;
    color: #222;
}

a {
    color: #2a8fa8;
}

.pull {
    width: 40px;
    height: 25px;
    margin-left: 45px;
    display: flex;
    align-items: center;
    justify-content: center;
    border-top: 2px solid #007f96;
    border-radius: 0 0 8px 8px;
    background: #cdeef3;
}

.pull svg {
    width: 12px;
    height: 8px;
}

.prompt {
    line-height: 20px;
}

.desktop .page {
    padding: 29px 40px;
}

.question {
    height: 67px;
    padding: 16px 0 0 40px;
    color: #333;
}

/* nth root: index, sign, radicand */

.root {
    display: inline-flex;
    align-items: flex-start;
    font-family: "Liberation Serif", serif;
    font-size: 13px;
    line-height: 17px;
    vertical-align: middle;
}

.root > sup {
    font-size: 9px;
    line-height: 8px;
    margin: -2px -4px 0 0;
}

.root > svg {
    width: 9px;
    height: 17px;
}

.root > span {
    border-top: 1px solid #444;
    padding-right: 1px;
}

.root.big {
    font-size: 17px;
    line-height: 20px;
}

.root.big > sup {
    font-size: 12px;
    margin-right: -6px;
}

.root.big > svg {
    width: 12px;
    height: 20px;
}

.work {
    display: flex;
    align-items: flex-start;
    gap: 9px;
}

.answer {
    width: 225px;
    height: 63px;
    padding: 8px;
    border: 1px solid #808080;
}

.answer svg {
    width: 36px;
    height: 30px;
}

.keypad {
    width: 144px;
    display: grid;
    grid-template-columns: repeat(3, 1fr);
    gap: 1px 2px;
    background: #cfdcdf;
    border: 1px solid #cfdcdf;
    border-radius: 5px;
    overflow: hidden;
}

.keypad button {
    height: 38px;
    display: flex;
    align-items: center;
    justify-content: center;
    background: #fff;
}

.keypad svg {
    width: 42px;
    height: 26px;
}

.keypad .act {
    background: #47707d;
    color: #fff;
}

.keypad .help {
    font-size: 19px;
    font-weight: 700;
}

.pagefoot {
    height: 49px;
    border-top: 2px solid #d3dcdd;
    background: #eef2f3;
}

.foot {
    height: var(--foot);
    display: flex;
    align-items: center;
    justify-content: flex-end;
    gap: 9px;
    padding-right: 27px;
    background: #577c85;
    color: #fff;
    font-family: Lato, sans-serif;
    font-size: 11px;
    white-space: nowrap;
}

.foot a {
    color: #fff;
    text-decoration: none;
}

.foot i {
    font-style: normal;
}

.scroll {
    position: absolute;
    right: 0;
    top: 87px;
    bottom: 0;
    width: 16px;
    display: flex;
    align-items: flex-end;
    justify-content: center;
    padding-bottom: 6px;
    background: #f1f1f1;
}

.scroll svg {
    width: 7px;
    height: 4px;
}

.ink {
    position: absolute;
    left: 389px;
    top: 84px;
    width: 300px;
    height: 330px;
}

/* snagit windows */

.snagit {
    position: absolute;
    display: flex;
    align-items: flex-start;
}

.shot .one {
    left: -14px;
    top: 327px;
    width: 349px;
}

.shot .two {
    right: 0;
    top: 75px;
    width: 288px;
}

.desktop .one {
    left: -15px;
    top: 363px;
    width: 388px;
    height: 360px;
}

.desktop .two {
    right: 0;
    top: 83px;
    width: 278px;
}

.tools {
    width: var(--tools);
    flex: none;
    display: flex;
    flex-direction: column;
    align-items: center;
    gap: 7px;
    margin-top: var(--title);
    padding: 4px 0;
    border: 1px solid #111;
    border-radius: 3px 0 0 3px;
    background: #1d2125;
}

.tool {
    width: var(--tool);
    height: var(--tool);
    display: flex;
    align-items: center;
    justify-content: center;
    border-radius: 4px;
    background: #16181b;
}

.desktop .tools {
    gap: 8px;
}

.tool.on {
    border: 2px solid #d9a93c;
    background: #3a3120;
}

.tool svg {
    width: 22px;
    height: 20px;
}

.tool.on svg {
    width: 19px;
    height: 14px;
}

.red {
    width: 22px;
    height: 22px;
    border-radius: 3px;
    background: #f00;
}

.minis {
    display: flex;
    gap: 2px;
}

.mini {
    width: 13px;
    height: 13px;
    display: flex;
    align-items: center;
    justify-content: center;
    border-radius: 3px;
    background: #333;
}

.mini svg {
    width: 9px;
    height: 7px;
}

.flip {
    transform: scaleX(-1);
}

.frame {
    flex: 1;
    min-width: 0;
}

.bar {
    height: var(--title);
    border: 1px solid #5b4a14;
    border-radius: 8px 8px 0 0;
    background: linear-gradient(#fbebbd, #f1d27a 50%, #ecbe00 55%, #fcd900);
}

.two .bar {
    border-right: 0;
    border-radius: 8px 0 0;
}

.body {
    padding: 11px 13px 8px;
    border: solid #a98408;
    border-width: 0 2px;
    background: linear-gradient(#313131, #262728);
}

.two .body {
    border-right: 0;
    padding: 11px 0 11px 13px;
}

.pic {
    border: 2px solid #bdbdbd;
    background: #fff;
}

.powers {
    width: 100%;
    table-layout: fixed;
    border: 1px solid #222;
    border-collapse: collapse;
    color: #111;
}

.powers th,
.powers td {
    border: solid #222;
    border-width: 1px;
    white-space: nowrap;
}

.powers th {
    height: 46px;
    font: 400 15px/20px "DejaVu Sans", sans-serif;
    background: #efefef;
}

.powers td {
    height: 38px;
    padding: 6px 5px 0 0;
    border-top: 0;
    border-bottom: 0;
    font: 20px/24px "Liberation Serif", serif;
    text-align: right;
    vertical-align: middle;
}

.powers sup {
    font-size: 14px;
    line-height: 0;
}

.powers td sup {
    vertical-align: 11px;
    margin-left: 1px;
}

.powers b {
    font-weight: 400;
    margin: 0 10px;
}

.powers td.etc {
    padding: 0;
    font-size: 18px;
    line-height: 18px;
    text-align: center;
}

.powers tr:last-child td {
    height: 33px;
}

.powers tr:last-child td,
.small tr:last-child td {
    border-bottom: 1px solid #222;
}

.namerow {
    display: flex;
    align-items: center;
    margin-top: 13px;
}

.namerow label {
    width: 43px;
    line-height: 22px;
    padding-left: 6px;
    border-radius: 3px 0 0 3px;
    background: #1b1c1d;
    color: #f0b90b;
    font-size: 11px;
}

.namerow input {
    width: 146px;
    height: 22px;
    padding: 0 2px 4px;
    border: 1px solid #ddd;
    background: #fff;
    font: 10px "Noto Sans", sans-serif;
    color: #222;
}

.edit {
    flex: 1;
    margin-left: 7px;
    height: 21px;
    border-radius: 3px;
    background: linear-gradient(#515151, #323232);
    font-size: 11px;
    line-height: 21px;
    color: #f0b90b;
    white-space: nowrap;
}

.edit span {
    color: #2a8fae;
}

.edit sup {
    font-size: 7px;
    line-height: 0;
}

/* explanation capture */

.explain {
    height: 433px;
    padding: 11px 0 0 16px;
    overflow: hidden;
    background: #fff;
    color: #222;
    font-family: "Noto Sans", sans-serif;
    font-size: 10px;
    line-height: 15px;
    white-space: nowrap;
}

.explain h2 {
    display: flex;
    align-items: center;
    gap: 4px;
    font: 400 10px/16px "Liberation Sans", sans-serif;
    color: #577c85;
}

.explain h2 svg {
    width: 18px;
    height: 18px;
}

.explain h2 span {
    flex: 1;
    border-bottom: 2px solid #d3dcdd;
}

.explain p {
    margin-top: 19px;
}

.powers.small {
    width: 170px;
    margin: 7px 0 0 27px;
}

.small th {
    height: 26px;
    font: 400 10px/12px "Noto Sans", sans-serif;
}

.small td {
    height: 22px;
    padding: 5px 3px 0 0;
    font-size: 13px;
    line-height: 16px;
}

.small td.etc {
    font-size: 12px;
    line-height: 12px;
}

.small tr:last-child td {
    height: 19px;
}

.powers.small sup {
    font-size: 9px;
}

.powers.small td sup {
    vertical-align: 7px;
}

.small b {
    margin: 0 6px;
}

.steps {
    display: grid;
    grid-template-columns: 25px 13px 65px 1fr;
    grid-auto-rows: 24px;
    gap: 0 3px;
    align-items: center;
    margin: 7px 0 19px 28px;
    font-family: "Liberation Serif", serif;
    font-size: 13px;
}

.steps em {
    font: 10px "Noto Sans", sans-serif;
    color: #577c85;
}

.steps .root span sup {
    font-size: 9px;
    line-height: 0;
}

.math {
    font-family: "Liberation Serif", serif;
    font-size: 13px;
}

.two .namerow input {
    flex: 1;
    height: 22px;
}

.two .namerow {
    margin-top: 12px;
}

.actions {
    position: relative;
    width: 210px;
    height: 39px;
    display: flex;
    align-items: center;
    gap: 6px;
    padding: 10px 12px 0 13px;
    border: 2px solid #a98408;
    border-top: 0;
    border-radius: 0 0 8px 8px;
    background: #262728;
}

/* gold edge carries on past the notch */
.actions::after {
    content: "";
    position: absolute;
    left: 100%;
    top: 0;
    width: 50px;
    height: 1px;
    background: #a98408;
}

.actions button {
    width: 34px;
    height: 20px;
    display: flex;
    align-items: center;
    justify-content: center;
    border-radius: 3px;
    background: linear-gradient(#5c5c5c, #333 60%);
}

.actions svg {
    width: 15px;
    height: 15px;
}

.actions .round {
    width: 20px;
    margin-left: 4px;
    border-radius: 50%;
}

/* pieces of the windows that stick out behind */

.ghost-box {
    height: 70px;
    margin-top: 75px;
    border: 1px solid #555;
}

.ghost-pic {
    height: 260px;
    background: #fff;
    border: 1px solid #222;
    outline: 1px solid #ccc;
}

.desktop .two .body {
    padding: 13px 0 11px 15px;
}

.ghost-page {
    height: 480px;
    padding: 53px 0 0 212px;
    overflow: hidden;
    background: #fff;
    color: #222;
    font: 11px/16px "Noto Sans", sans-serif;
    white-space: nowrap;
}

.ghost-table {
    width: 27px;
    height: 147px;
    margin-top: 8px;
    border: 1px solid #111;
    border-left: 0;
    font-size: 11px;
    line-height: 15px;
}

.ghost-table sup {
    font-size: 8px;
    line-height: 0;
}

.ghost-table div {
    border-bottom: 1px solid #111;
}

.ghost-table .num {
    font: 14px/26px "Liberation Serif", serif;
}

.ghost-page ul {
    list-style: none;
    margin-top: 45px;
    line-height: 28px;
    color: #577c85;
}

.ghost-name {
    height: 23px;
    margin-top: 14px;
    background: #fff;
}

.desktop .actions {
    width: 234px;
    height: 43px;
}

.desktop .foot {
    padding-right: 30px;
    font-size: 12px;
}

/* taskbar */

.taskbar {
    height: var(--task);
    flex: none;
    display: flex;
    align-items: center;
    padding-left: 9px;
    background: linear-gradient(100deg, #424a51, #38464a 50%, #36464a);
    color: #fff;
}

.start {
    width: 15px;
    height: 15px;
}

.ring {
    width: 14px;
    height: 14px;
    margin: 0 18px;
    border: 2px solid #eee;
    border-radius: 50%;
}

.view {
    width: 15px;
    height: 14px;
}

.icons {
    width: 600px;
    height: 100%;
    margin-left: 11px;
    display: grid;
    grid-template-columns: repeat(18, 1fr);
    grid-auto-rows: 27px;
}

.icons span {
    display: flex;
    align-items: center;
    justify-content: center;
}

.icons svg {
    width: 15px;
    height: 15px;
}

.icons .run {
    border-bottom: 2px solid #7890ae;
    margin: 0 4px;
}

.icons .cur {
    margin: 0 4px;
    background: #4d6177;
    border-bottom: 1px solid #8aa5c4;
}

.tray {
    flex: 1;
    height: 100%;
    display: flex;
    align-items: center;
    justify-content: flex-end;
    margin-right: 4px;
    padding-right: 17px;
    border-right: 1px solid #6a7478;
}

.up {
    width: 11px;
    height: 7px;
    margin-right: 8px;
}

.quad {
    display: grid;
    grid-template-columns: 22px 22px;
    grid-auto-rows: 27px;
    align-items: center;
    justify-items: center;
}

.quad svg {
    width: 15px;
    height: 14px;
}

.pen {
    width: 28px;
    height: 100%;
    display: flex;
    align-items: center;
    justify-content: center;
    background: #4a5659;
}

.pen svg {
    width: 16px;
    height: 16px;
}

.clock {
    width: 66px;
    font-size: 11px;
    line-height: 17px;
    text-align: center;
}

.note {
    width: 16px;
    height: 15px;
    margin-left: 9px;
}

.desktop .start {
    margin-left: 1px;
}

.desktop .ring {
    margin: 0 0 0 21px;
}

.ghost-icons {
    display: flex;
    align-self: flex-end;
    gap: 21px;
    margin: 0 0 6px 60px;
}

.ghost-icons svg,
.ghost-tray svg {
    width: 16px;
    height: 16px;
}

.ghost-tray {
    display: flex;
    align-self: flex-end;
    gap: 8px;
    margin: 0 0 8px auto;
}

.desktop .clock {
    width: auto;
    align-self: flex-end;
    margin: 0 0 3px 45px;
    font-size: 12px;
}

.desktop .note {
    margin: 0 25px 0 22px;
}

/* ink toolbar on top of everything */

.inkbar {
    position: absolute;
    top: 0;
    right: 0;
    display: flex;
    overflow: hidden;
}

.inkbar button {
    width: 48px;
    height: 48px;
    display: flex;
    flex-direction: column;
    align-items: center;
    justify-content: center;
    background: #e6e6e6;
}

.inkbar button svg {
    width: 24px;
    height: 24px;
}

.inkbar .sel {
    border-bottom: 2px solid #5b7188;
    padding-top: 2px;
}

.inkbar .sel .chev {
    width: 8px;
    height: 4px;
    margin: 2px 0 -6px;
}

.inkbar .exit {
    background: #5b7188;
}

.sep {
    width: 1px;
    background: #999;
}

.glow {
    position: absolute;
    left: 191px;
    top: -20px;
    width: 40px;
    height: 40px;
    border-radius: 50%;
    background: radial-gradient(rgba(255, 250, 215, .9), rgba(248, 222, 100, .75));
    pointer-events: none;
}

.shot .glow {
    left: 445px;
    top: -18px;
    width: 36px;
    height: 36px;
    z-index: 2;
    opacity: .7;
}
```
